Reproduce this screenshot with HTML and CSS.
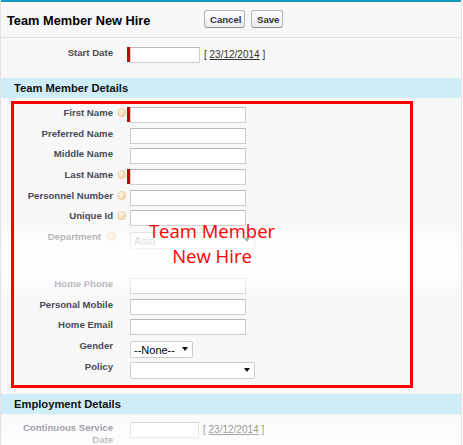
FILE: index.html
```html
<!DOCTYPE html>
<html lang="en">
<head>
    <meta charset="UTF-8">
    <title>Team Member New Hire</title>
    <link rel="stylesheet" href="styles.css">
</head>
<body>
    <div class="page">
        <div class="topbar"></div>
        <div class="header">
            <h1 class="title">Team Member New Hire</h1>
            <div class="buttons">
                <button class="btn">Cancel</button>
                <button class="btn">Save</button>
            </div>
        </div>

        <div class="block block-start">
            <div class="row">
                <label class="lbl">Start Date</label>
                <span class="marks"><span class="req"></span></span>
                <input type="text" class="field field-date">
                <span class="datelink">[ <a href="#">23/12/2014</a> ]</span>
            </div>
        </div>

        <h2 class="section">Team Member Details</h2>
        <div class="block block-details">
            <div class="row">
                <label class="lbl">First Name</label>
                <span class="marks"><span class="help">?</span><span class="req"></span></span>
                <input type="text" class="field">
            </div>
            <div class="row">
                <label class="lbl">Preferred Name</label>
                <span class="marks"></span>
                <input type="text" class="field">
            </div>
            <div class="row">
                <label class="lbl">Middle Name</label>
                <span class="marks"></span>
                <input type="text" class="field">
            </div>
            <div class="row">
                <label class="lbl">Last Name</label>
                <span class="marks"><span class="help">?</span><span class="req"></span></span>
                <input type="text" class="field">
            </div>
            <div class="row">
                <label class="lbl">Personnel Number</label>
                <span class="marks"><span class="help">?</span></span>
                <input type="text" class="field">
            </div>
            <div class="row">
                <label class="lbl">Unique Id</label>
                <span class="marks"><span class="help">?</span></span>
                <input type="text" class="field">
            </div>
            <div class="row">
                <label class="lbl lbl-dep">Department</label>
                <span class="marks marks-dep"><span class="help">?</span></span>
                <span class="picker picker-wide">
                    <select class="select select-muted"><option>Asia</option></select>
                </span>
            </div>
            <div class="row row-hidden"></div>
            <div class="row">
                <label class="lbl">Home Phone</label>
                <span class="marks"></span>
                <input type="text" class="field">
            </div>
            <div class="row">
                <label class="lbl">Personal Mobile</label>
                <span class="marks"></span>
                <input type="text" class="field">
            </div>
            <div class="row">
                <label class="lbl">Home Email</label>
                <span class="marks"></span>
                <input type="text" class="field">
            </div>
            <div class="row">
                <label class="lbl">Gender</label>
                <span class="marks"></span>
                <span class="picker picker-small">
                    <select class="select"><option>--None--</option></select>
                </span>
            </div>
            <div class="row">
                <label class="lbl">Policy</label>
                <span class="marks"></span>
                <span class="picker picker-wide">
                    <select class="select"><option></option></select>
                </span>
            </div>
        </div>

        <h2 class="section">Employment Details</h2>
        <div class="block block-employment">
            <div class="row row-auto">
                <label class="lbl">Continuous Service Date</label>
                <span class="marks"></span>
                <input type="text" class="field field-date field-date-short">
                <span class="datelink">[ <a href="#">23/12/2014</a> ]</span>
            </div>
        </div>

        <!-- camadas por cima do formulario -->
        <div class="fade fade-mid"></div>
        <div class="fade fade-bottom"></div>
        <div class="annotation">
            <p class="annotation-text">Team Member<br>New Hire</p>
        </div>
    </div>
</body>
</html>
```

FILE: styles.css
```css
* {
    margin: 0;
    padding: 0;
    box-sizing: border-box;
}

body {
    background-color: #ffffff;
    font-family: 'Liberation Sans', Arial, sans-serif;
    color: #222;
    overflow: hidden;
}

.page {
    position: relative;
    width: 462px;
    height: 445px;
    background-color: #f8f8f8;
    border-left: 1px solid #e3e3e3;
    border-right: 1px solid #e3e3e3;
}

.topbar {
    height: 2px;
    background-color: #1797c0;
}

.header {
    display: flex;
    align-items: center;
    height: 36px;
    border-bottom: 1px solid #e0e3e5;
    padding-top: 1px;
}

.title {
    width: 203px;
    padding-left: 6px;
    font-size: 12.8px;
    font-weight: bold;
    color: #000;
}

.buttons {
    display: flex;
    gap: 6px;
    margin-top: -2px;
}

.btn {
    height: 18px;
    padding: 0 5px;
    font-family: 'Liberation Sans', Arial, sans-serif;
    font-size: 9.6px;
    font-weight: bold;
    color: #333;
    background: linear-gradient(#ffffff, #ececec);
    border: 1px solid #b5b5b5;
    border-bottom-color: #8f8f8f;
    border-radius: 3px;
}

.btn:first-child {
    width: 41px;
}

.btn:last-child {
    width: 32px;
}

.block-start {
    padding-top: 9px;
    height: 40px;
}

.block-details {
    padding-top: 9px;
    padding-bottom: 12.67px;
}

.block-employment {
    padding-top: 8px;
}

.section {
    height: 20px;
    padding-left: 13px;
    font-size: 11.2px;
    line-height: 20px;
    font-weight: bold;
    color: #111;
    background-color: #cfedf7;
}

.row {
    display: flex;
    align-items: flex-start;
    height: 20.67px;
}

.row-hidden {
    height: 26.33px;
}

.row-auto {
    height: auto;
}

.lbl {
    width: 112px;
    padding-left: 10px;
    text-align: right;
    font-size: 9.6px;
    line-height: 12px;
    font-weight: bold;
    color: #4a4a56;
}

.lbl-dep {
    width: 100px;
}

.marks {
    display: flex;
    width: 17px;
    height: 15px;
    padding-left: 4px;
}

.marks-dep {
    width: 29px;
    padding-left: 6px;
}

.help {
    width: 9px;
    height: 9px;
    margin-top: 1px;
    border-radius: 50%;
    background: radial-gradient(circle at 35% 35%, #fbefd4, #e6c384);
    color: #fff;
    font-size: 7px;
    line-height: 9px;
    font-weight: bold;
    text-align: center;
}

.req {
    width: 3px;
    height: 15px;
    margin-left: auto;
    background-color: #c00;
}

.field {
    width: 116px;
    height: 16px;
    background-color: #fff;
    border: 1px solid #cdcdcd;
    border-top-color: #b9b9b9;
}

.field-date {
    width: 70px;
}

.field-date-short {
    width: 69px;
}

.datelink {
    margin-left: 4px;
    font-size: 10px;
    line-height: 16px;
    color: #333;
}

.datelink a {
    color: #333;
}

.picker {
    position: relative;
    display: block;
}

.picker::after {
    content: "";
    position: absolute;
    top: 7px;
    right: 5px;
    border-left: 3px solid transparent;
    border-right: 3px solid transparent;
    border-top: 4px solid #111;
}

.picker-small {
    width: 63px;
}

.picker-wide {
    width: 125px;
}

.select {
    appearance: none;
    width: 100%;
    height: 17px;
    padding: 0 0 0 3px;
    font-family: 'Liberation Sans', Arial, sans-serif;
    font-size: 11px;
    color: #000;
    background-color: #fff;
    border: 1px solid #cdcdcd;
    border-radius: 2px;
}

.select-muted {
    color: #999;
}

.fade {
    position: absolute;
    left: 0;
    right: 0;
}

.fade-mid {
    top: 224px;
    height: 72px;
    background: linear-gradient(rgba(255, 255, 255, 0), rgba(255, 255, 255, 0.55) 14%, rgba(255, 255, 255, 0.9) 45%, rgba(255, 255, 255, 0.9) 62%, rgba(255, 255, 255, 0.62) 84%, rgba(255, 255, 255, 0));
}

.fade-bottom {
    top: 416px;
    height: 29px;
    background: linear-gradient(rgba(255, 255, 255, 0.3), rgba(255, 255, 255, 0.7));
}

.annotation {
    position: absolute;
    top: 101px;
    left: 10px;
    width: 402px;
    height: 287px;
    border: 3px solid #ff0000;
}

.annotation-text {
    margin-top: 114px;
    text-align: center;
    font-family: 'Open Sans', sans-serif;
    font-size: 18.5px;
    line-height: 25px;
    color: #ff0000;
}
```
